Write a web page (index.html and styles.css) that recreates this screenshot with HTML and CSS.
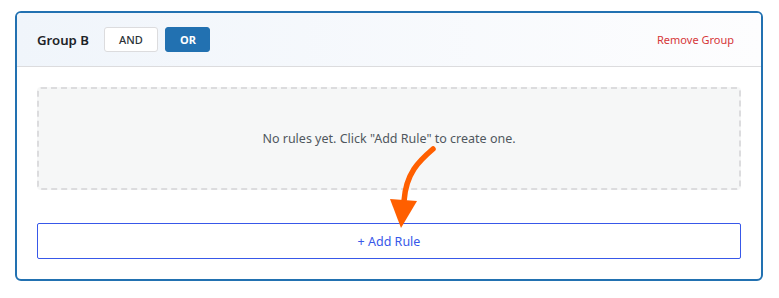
FILE: index.html
```html
<!DOCTYPE html>
<html>
<head>
<meta charset="utf-8">
<link rel="stylesheet" href="styles.css">
</head>
<body>
<div class="group-card">
  <div class="group-header">
    <div class="group-left">
      <span class="group-title">Group B</span>
      <div class="logic-toggle">
        <button class="logic-btn">AND</button>
        <button class="logic-btn active">OR</button>
      </div>
    </div>
    <button class="remove-group">Remove Group</button>
  </div>
  <div class="group-body">
    <div class="empty-rules">No rules yet. Click "Add Rule" to create one.</div>
    <button class="add-rule">+ Add Rule</button>
    <svg class="hint-arrow" width="60" height="90" viewBox="0 0 60 90">
      <path d="M46 6 C 32 18, 19 30, 17 58" fill="none" stroke="#ff5f00" stroke-width="5.5" stroke-linecap="round"/>
      <polygon points="3,56 30,58 14,85" fill="#ff5f00"/>
    </svg>
  </div>
</div>
</body>
</html>
```
FILE: styles.css
```css
* { box-sizing: border-box; }
html, body { margin: 0; background: #fff; }
body {
  padding: 11px 16px 0 15px;
  font-family: "Noto Sans", "Open Sans", sans-serif;
}
.group-card {
  border: 2px solid #2271b1;
  border-radius: 6px;
  overflow: hidden;
}
.group-header {
  display: flex;
  align-items: center;
  justify-content: space-between;
  padding: 14px 20px;
  background: linear-gradient(to right, #f0f5fb, #fdfdfe);
  border-bottom: 1px solid #dcdcde;
}
.group-left { display: flex; align-items: center; gap: 15px; }
.group-title { font-size: 13.2px; font-weight: 600; color: #1d2327; }
.logic-toggle { display: flex; gap: 7px; }
.logic-btn {
  height: 25px;
  padding: 0 14px;
  font-family: inherit;
  font-size: 11px;
  font-weight: 500;
  color: #2c3338;
  background: #fff;
  border: 1px solid #dcdcde;
  border-radius: 3px;
}
.logic-btn:first-child { width: 54px; }
.logic-btn.active {
  width: 45px;
  background: #2271b1;
  border-color: #2271b1;
  color: #fff;
  font-weight: 700;
}
.remove-group {
  background: none;
  border: none;
  padding: 0 7px 0 0;
  font-family: inherit;
  font-size: 11px;
  color: #d63638;
}
.group-body {
  position: relative;
  padding: 20px 20px 20px 20px;
}
.empty-rules {
  background: #f6f7f7;
  border: 2px dashed #dcdcde;
  border-radius: 4px;
  padding: 40px 20px;
  text-align: center;
  font-size: 12.5px;
  line-height: 19px;
  color: #50575e;
}
.add-rule {
  display: block;
  width: 100%;
  height: 36px;
  margin-top: 33px;
  background: #fff;
  border: 1px solid #3858e9;
  border-radius: 2px;
  font-family: inherit;
  font-size: 12.5px;
  color: #3858e9;
}
.hint-arrow {
  position: absolute;
  left: 370px;
  top: 76px;
}
```
